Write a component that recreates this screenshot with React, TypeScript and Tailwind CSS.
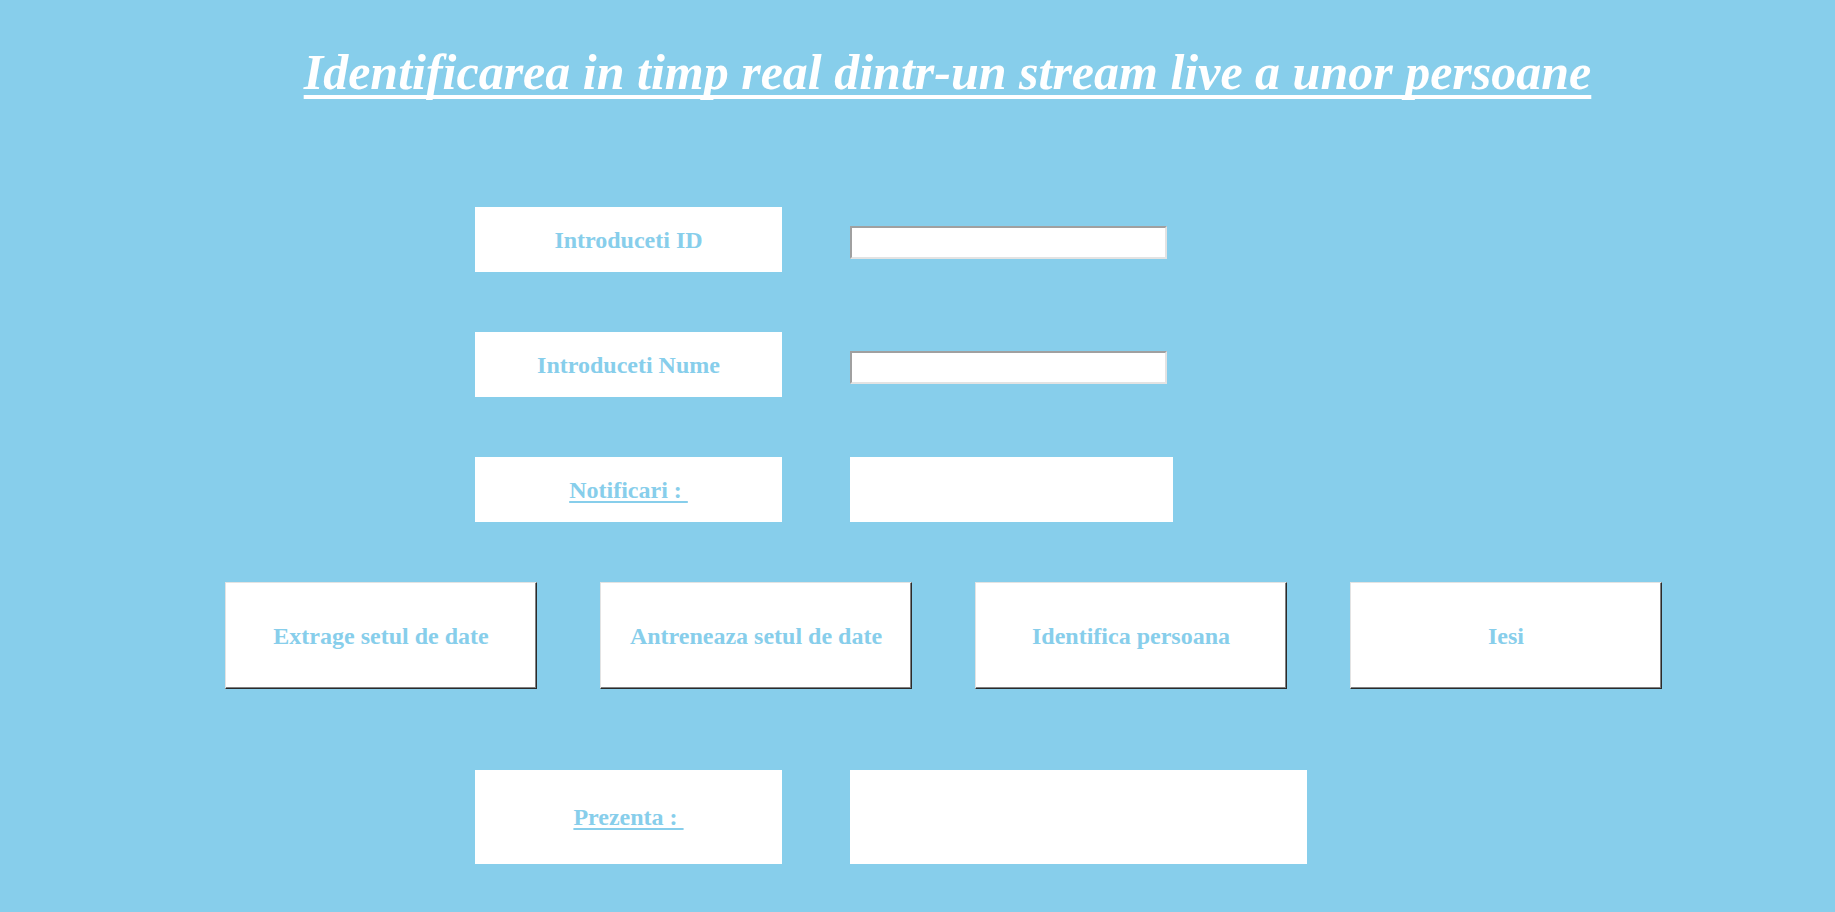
export default function App() {
  const labelBox =
    "w-[307px] h-[65px] bg-white flex items-center justify-center text-[24px] font-bold text-[#87ceeb]"
  const entry =
    "mt-[19px] w-[317px] h-[33px] bg-white border-2 border-t-[#a0a0a0] border-l-[#a0a0a0] border-b-[#e3e3e3] border-r-[#e3e3e3]"
  const button =
    "w-[312px] h-[107px] bg-white border border-t-[#e3e3e3] border-l-[#e3e3e3] border-b-[#2b2b2b] border-r-[#2b2b2b] shadow-[inset_-1px_-1px_0_#808080] flex items-center justify-center text-[24px] font-bold text-[#87ceeb]"
  const uline = "underline decoration-2 underline-offset-[3px] [text-decoration-skip-ink:none] whitespace-pre"

  return (
    <div className="h-[912px] w-full overflow-hidden bg-[#87ceeb] font-['Liberation_Serif','Times_New_Roman',serif]">
      {/* Title */}
      <div className="pt-[43px] flex justify-center pl-[60px]">
        <h1 className="text-[50px] leading-[58px] font-bold italic text-white underline decoration-4 underline-offset-[6px] [text-decoration-skip-ink:none]">
          Identificarea in timp real dintr-un stream live a unor persoane
        </h1>
      </div>

      {/* Form rows */}
      <div className="mt-[106px] pl-[475px] flex flex-col gap-[60px]">
        <div className="flex items-start gap-[68px]">
          <div className={labelBox}>Introduceti ID</div>
          <input className={entry} />
        </div>
        <div className="flex items-start gap-[68px]">
          <div className={labelBox}>Introduceti Nume</div>
          <input className={entry} />
        </div>
        <div className="flex items-start gap-[68px]">
          <div className={labelBox}>
            <span className={uline}>Notificari : </span>
          </div>
          <div className="w-[323px] h-[65px] bg-white"></div>
        </div>
      </div>

      {/* Buttons */}
      <div className="mt-[60px] pl-[225px] flex gap-[63px]">
        <button className={button}>Extrage setul de date</button>
        <button className={button}>Antreneaza setul de date</button>
        <button className={button}>Identifica persoana</button>
        <button className={button}>Iesi</button>
      </div>

      {/* Presence */}
      <div className="mt-[81px] pl-[475px] flex items-start gap-[68px]">
        <div className="w-[307px] h-[94px] bg-white flex items-center justify-center text-[24px] font-bold text-[#87ceeb]">
          <span className={uline}>Prezenta : </span>
        </div>
        <div className="w-[457px] h-[94px] bg-white"></div>
      </div>
    </div>
  )
}
